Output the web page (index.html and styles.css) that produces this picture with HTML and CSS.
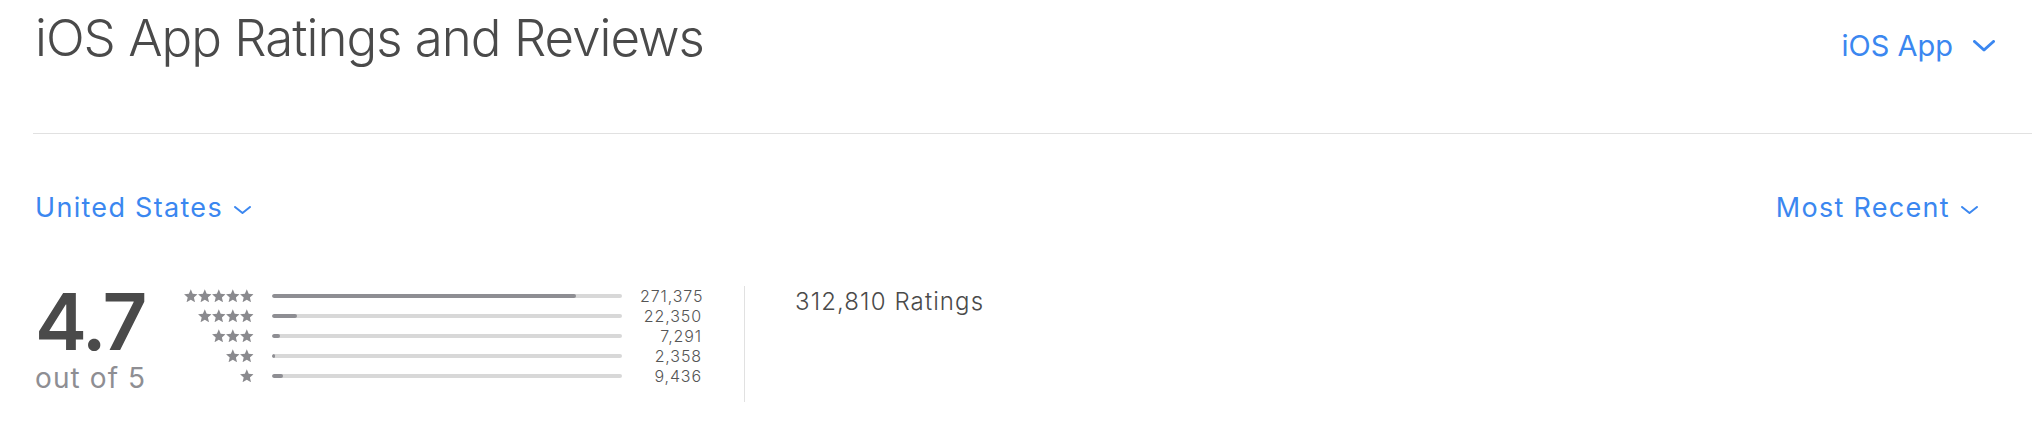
FILE: index.html
```html
<!DOCTYPE html>
<html lang="en">
<head>
    <meta charset="UTF-8">
    <meta name="viewport" content="width=device-width, initial-scale=1.0">
    <title>iOS App Ratings and Reviews</title>
    <link rel="stylesheet" href="styles.css">
</head>
<body>
    <svg width="0" height="0" class="sprite">
        <symbol id="star" viewBox="0 0 13 13">
            <polygon points="6.5,0.2 8.32,4.59 12.95,4.97 9.45,8.06 10.56,12.68 6.5,10.2 2.44,12.68 3.55,8.06 0.05,4.97 4.68,4.59" />
        </symbol>
    </svg>

    <section class="reviews">
        <header class="reviews-header">
            <h2 class="reviews-title">iOS App Ratings and Reviews</h2>
            <a class="platform-select" href="#">
                iOS App
                <svg class="chevron-lg" width="22" height="12" viewBox="0 0 22 12"><polyline points="1.5,1.5 11,10 20.5,1.5" /></svg>
            </a>
        </header>

        <div class="filters">
            <a class="filter" href="#">
                United States
                <svg class="chevron" width="17" height="8" viewBox="0 0 17 8"><polyline points="1,1 8.5,7 16,1" /></svg>
            </a>
            <a class="filter" href="#">
                Most Recent
                <svg class="chevron" width="17" height="8" viewBox="0 0 17 8"><polyline points="1,1 8.5,7 16,1" /></svg>
            </a>
        </div>

        <div class="summary">
            <div class="score">
                <div class="score-value">4.7</div>
                <div class="score-max">out of 5</div>
            </div>

            <div class="histogram">
                <div class="stars" title="5 stars">
                    <svg><use href="#star" /></svg><svg><use href="#star" /></svg><svg><use href="#star" /></svg><svg><use href="#star" /></svg><svg><use href="#star" /></svg>
                </div>
                <div class="bar"><div class="bar-fill" style="width: 86.75%"></div></div>
                <div class="count">271,375</div>

                <div class="stars" title="4 stars">
                    <svg><use href="#star" /></svg><svg><use href="#star" /></svg><svg><use href="#star" /></svg><svg><use href="#star" /></svg>
                </div>
                <div class="bar"><div class="bar-fill" style="width: 7.14%"></div></div>
                <div class="count">22,350</div>

                <div class="stars" title="3 stars">
                    <svg><use href="#star" /></svg><svg><use href="#star" /></svg><svg><use href="#star" /></svg>
                </div>
                <div class="bar"><div class="bar-fill" style="width: 2.33%"></div></div>
                <div class="count">7,291</div>

                <div class="stars" title="2 stars">
                    <svg><use href="#star" /></svg><svg><use href="#star" /></svg>
                </div>
                <div class="bar"><div class="bar-fill" style="width: 0.75%"></div></div>
                <div class="count">2,358</div>

                <div class="stars" title="1 star">
                    <svg><use href="#star" /></svg>
                </div>
                <div class="bar"><div class="bar-fill" style="width: 3.02%"></div></div>
                <div class="count">9,436</div>
            </div>

            <div class="total">312,810 Ratings</div>
        </div>
    </section>
</body>
</html>
```

FILE: styles.css
```css
body {
    margin: 0;
    background-color: #ffffff;
    font-family: Inter, "Noto Sans", sans-serif;
    color: #4a4a4a;
}

a {
    text-decoration: none;
}

.sprite {
    position: absolute;
}

.reviews {
    padding-left: 33px;
}

.reviews-header {
    display: flex;
    justify-content: space-between;
    align-items: baseline;
    padding: 11px 37px 0 0;
    height: 122px;
    border-bottom: 1px solid #e1e1e1;
    box-sizing: content-box;
}

.reviews-title {
    margin: 0 0 0 2px;
    font-size: 51px;
    font-weight: 300;
    line-height: 1.04;
    letter-spacing: -1px;
    color: #4a4a4a;
}

.platform-select {
    display: flex;
    align-items: center;
    gap: 20px;
    font-size: 29px;
    color: #3b87f0;
}

.chevron-lg polyline,
.chevron polyline {
    fill: none;
    stroke: #3b87f0;
    stroke-linecap: round;
    stroke-linejoin: round;
}

.chevron-lg polyline {
    stroke-width: 3;
}

.chevron polyline {
    stroke-width: 2;
}

.filters {
    display: flex;
    justify-content: space-between;
    margin-top: 59px;
    padding: 0 54px 0 2px;
}

.filter {
    display: flex;
    align-items: center;
    gap: 11px;
    font-size: 27px;
    line-height: 30px;
    letter-spacing: 1.3px;
    color: #3b87f0;
}

.filter .chevron {
    margin-top: 3px;
}

.summary {
    display: flex;
    align-items: flex-start;
    margin-top: 58px;
    padding-left: 2px;
}

.score {
    width: 112px;
}

.score-value {
    font-size: 78px;
    font-weight: 600;
    line-height: 82px;
    letter-spacing: -2.5px;
    color: #4a4a4a;
}

.score-max {
    font-size: 28px;
    line-height: 30px;
    letter-spacing: 1.1px;
    white-space: nowrap;
    color: #8e8e93;
}

.histogram {
    display: grid;
    grid-template-columns: 107px 350px 62px;
    grid-auto-rows: 20px;
    column-gap: 18px;
    align-items: center;
    margin-top: 5px;
    padding: 0 42px 16px 0;
    border-right: 1px solid #e1e1e1;
}

.stars {
    display: flex;
    justify-content: flex-end;
    gap: 0.4px;
    margin-top: -1px;
}

.stars svg {
    flex: none;
    width: 13.6px;
    height: 13.6px;
    fill: #8a8a8e;
}

.bar {
    height: 4px;
    border-radius: 2px;
    background-color: #d8d8d8;
    overflow: hidden;
}

.bar-fill {
    height: 100%;
    border-radius: 2px;
    background-color: #8e8e93;
}

.count {
    text-align: right;
    font-size: 16px;
    font-weight: 300;
    line-height: 20px;
    letter-spacing: 0.9px;
    white-space: nowrap;
    color: #555555;
}

.total {
    margin: 7px 0 0 50px;
    font-size: 24px;
    font-weight: 300;
    line-height: 1.2;
    letter-spacing: 1.1px;
    color: #4a4a4a;
}
```
